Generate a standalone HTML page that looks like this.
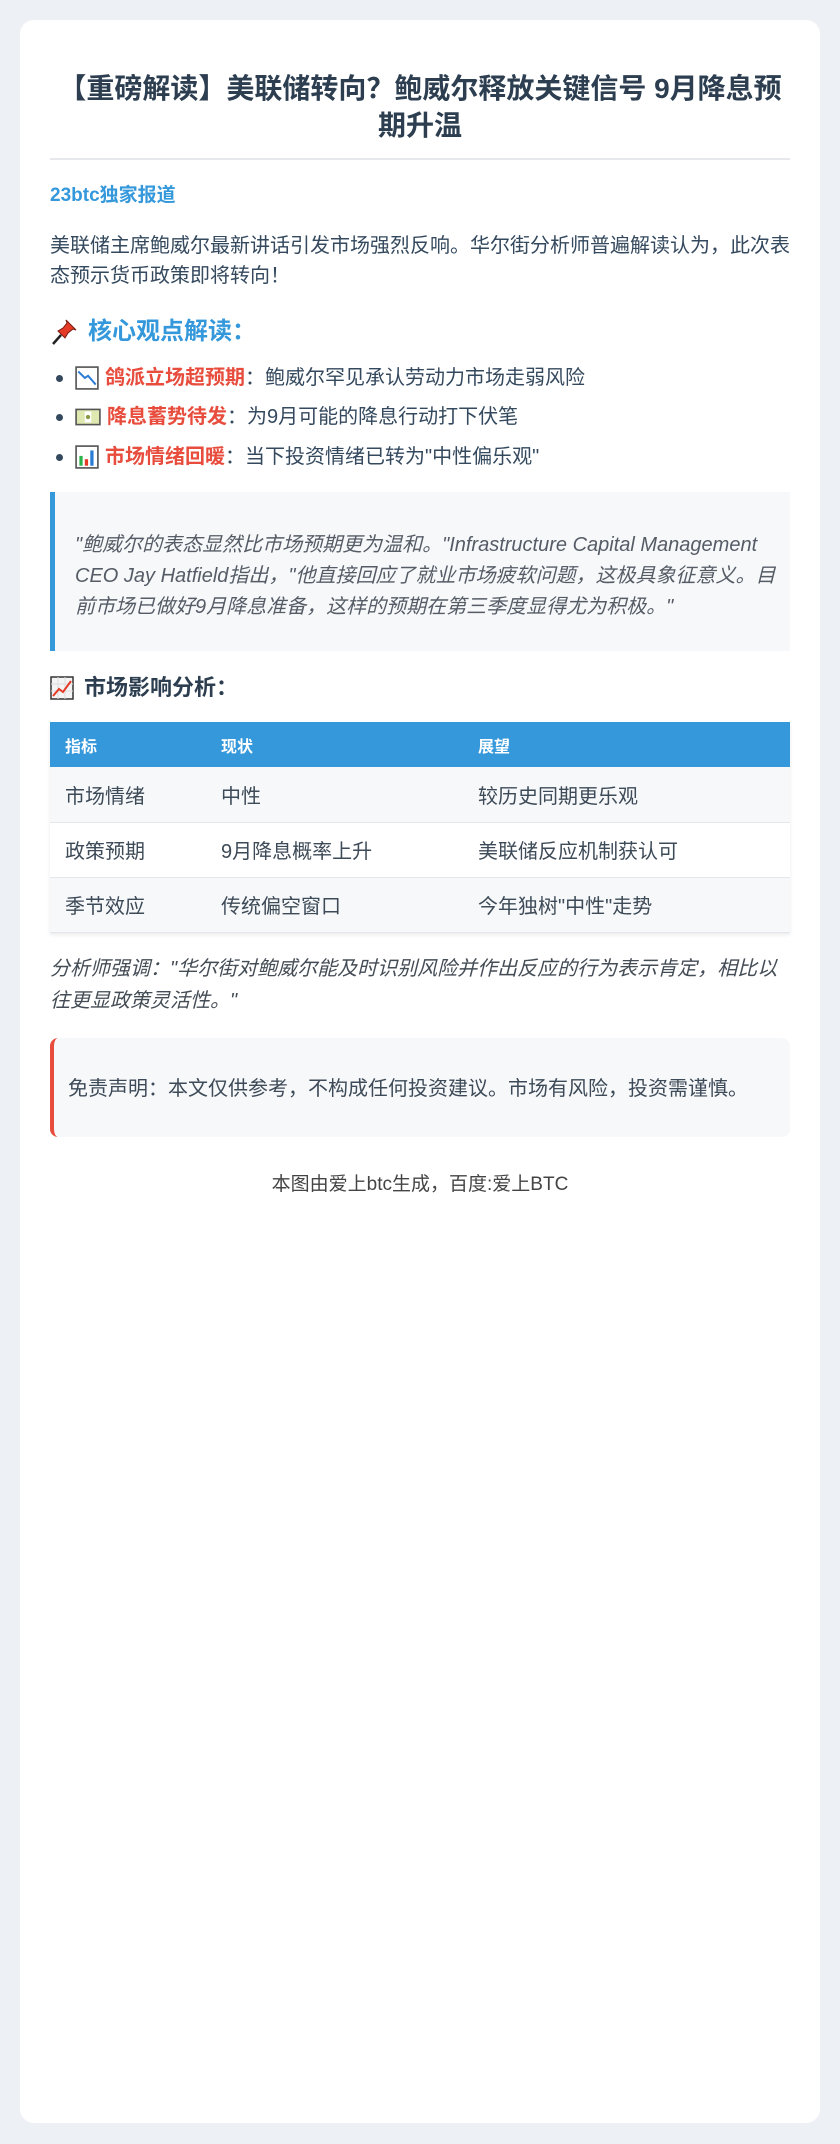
<!DOCTYPE html>
<html><head><meta charset="utf-8">
<style>
*{margin:0;padding:0;box-sizing:border-box}
html,body{width:840px;height:2144px;background:#edf0f5;overflow:hidden}
body{font-family:"Liberation Sans","Noto Sans CJK SC",sans-serif;color:#34495e;position:relative}
.card{position:absolute;left:20px;top:20px;width:800px;height:2103px;background:#fff;border-radius:14px}
.a{position:absolute;left:50px;width:740px}
h1{font-size:28px;line-height:37px;color:#2c3e50;text-align:center;font-weight:bold}
.hr{height:2px;background:#e6e8eb}
.src{font-size:19px;font-weight:bold;color:#3498db;line-height:28px}
.p{font-size:20px;line-height:30px;color:#34495e}
.h2{font-size:24px;font-weight:bold;color:#3498db;line-height:32px;display:flex;align-items:center}
.li{font-size:20px;line-height:28px;display:flex;align-items:center}
.li .dot{width:7px;height:7px;border-radius:50%;background:#34495e;margin:0 12px 0 6px}
.li b{color:#e74c3c}
.li svg{margin-right:6px}
.bq{background:#f7f8fa;border-left:5px solid #3498db}
.bq p{position:absolute;left:20px;top:38px;width:716px;font-size:20px;line-height:31px;font-style:italic;color:#555c66}
.h3{font-size:22px;font-weight:bold;color:#2c3e50;display:flex;align-items:center;line-height:30px}
table{border-collapse:collapse;width:740px;box-shadow:0 2px 4px rgba(0,0,0,.08)}
th{background:#3498db;color:#fff;font-size:16px;text-align:left;height:45px;padding:0 15px;font-weight:bold}
td{font-size:20px;height:55px;padding:0 15px;border-bottom:1px solid #e3e6ea;color:#3d4a57}
tr.g td{background:#f7f8fa}
.it{font-size:20px;line-height:32px;font-style:italic;color:#444c55}
.disc{background:#f7f8fa;border-left:4px solid #e74c3c;border-radius:8px;font-size:20px;color:#3d4a57}
.foot{font-size:19px;color:#444;text-align:center;line-height:28px}
</style></head><body>
<div class="card"></div>
<div class="a" style="top:70px"><h1>【重磅解读】美联储转向？鲍威尔释放关键信号 9月降息预期升温</h1></div>
<div class="a hr" style="top:158px"></div>
<div class="a src" style="top:182px">23btc独家报道</div>
<div class="a p" style="top:231px">美联储主席鲍威尔最新讲话引发市场强烈反响。华尔街分析师普遍解读认为，此次表态预示货币政策即将转向！</div>
<div class="a h2" style="top:316px">
<svg width="28" height="28" viewBox="0 0 28 28" style="margin-right:10px"><path d="M3 26 L11 17" stroke="#222" stroke-width="2.5"/><path d="M8 13 L15 20 L18 15 L23 11 L26 12 L16 2 L17 5 L13 10 Z" fill="#e53a25" stroke="#7a1a10" stroke-width="1"/></svg>核心观点解读：</div>
<div class="a li" style="top:364px"><span class="dot"></span><svg width="24" height="24" viewBox="0 0 22 22"><rect x="1" y="1" width="20" height="20" fill="#fff" stroke="#555" stroke-width="1.5"/><path d="M3 5 L9 11 L12 9 L19 17" stroke="#2a7bd6" stroke-width="1.8" fill="none"/></svg><b>鸽派立场超预期</b>：鲍威尔罕见承认劳动力市场走弱风险</div>
<div class="a li" style="top:403px"><span class="dot"></span><svg width="26" height="20" viewBox="0 0 24 18"><rect x="1" y="2" width="22" height="14" fill="#dfe8b0" stroke="#555" stroke-width="1.5"/><rect x="9" y="4" width="6" height="10" fill="#fff"/><circle cx="12" cy="9" r="2" fill="#8a9a40"/></svg><b>降息蓄势待发</b>：为9月可能的降息行动打下伏笔</div>
<div class="a li" style="top:443px"><span class="dot"></span><svg width="24" height="24" viewBox="0 0 22 22"><rect x="1" y="1" width="20" height="20" fill="#fff" stroke="#555" stroke-width="1.5"/><rect x="4" y="10" width="3" height="9" fill="#2bb34a"/><rect x="9" y="13" width="3" height="6" fill="#e53a25"/><rect x="14" y="5" width="3" height="14" fill="#2a7bd6"/></svg><b>市场情绪回暖</b>：当下投资情绪已转为"中性偏乐观"</div>
<div class="a bq" style="top:492px;height:159px"><p>"鲍威尔的表态显然比市场预期更为温和。"Infrastructure Capital Management CEO Jay Hatfield指出，"他直接回应了就业市场疲软问题，这极具象征意义。目前市场已做好9月降息准备，这样的预期在第三季度显得尤为积极。"</p></div>
<div class="a h3" style="top:673px"><svg width="24" height="24" viewBox="0 0 24 24" style="margin-right:10px"><rect x="1" y="1" width="22" height="22" fill="#f4f4f4" stroke="#333" stroke-width="1.5"/><path d="M1 8H23M1 15H23M8 1V23M15 1V23" stroke="#ddd" stroke-width="1"/><path d="M3 20 L9 13 L13 16 L21 5" stroke="#e53a25" stroke-width="2" fill="none"/></svg>市场影响分析：</div>
<div class="a" style="top:722px"><table>
<tr><th style="width:156px">指标</th><th style="width:257px">现状</th><th>展望</th></tr>
<tr class="g"><td>市场情绪</td><td>中性</td><td>较历史同期更乐观</td></tr>
<tr><td>政策预期</td><td>9月降息概率上升</td><td>美联储反应机制获认可</td></tr>
<tr class="g"><td>季节效应</td><td>传统偏空窗口</td><td>今年独树"中性"走势</td></tr>
</table></div>
<div class="a it" style="top:953px">分析师强调："华尔街对鲍威尔能及时识别风险并作出反应的行为表示肯定，相比以往更显政策灵活性。"</div>
<div class="a disc" style="top:1038px;height:99px;padding:37px 0 0 14px;line-height:28px">免责声明：本文仅供参考，不构成任何投资建议。市场有风险，投资需谨慎。</div>
<div class="a foot" style="top:1171px">本图由爱上btc生成，百度:爱上BTC</div>
</body></html>
